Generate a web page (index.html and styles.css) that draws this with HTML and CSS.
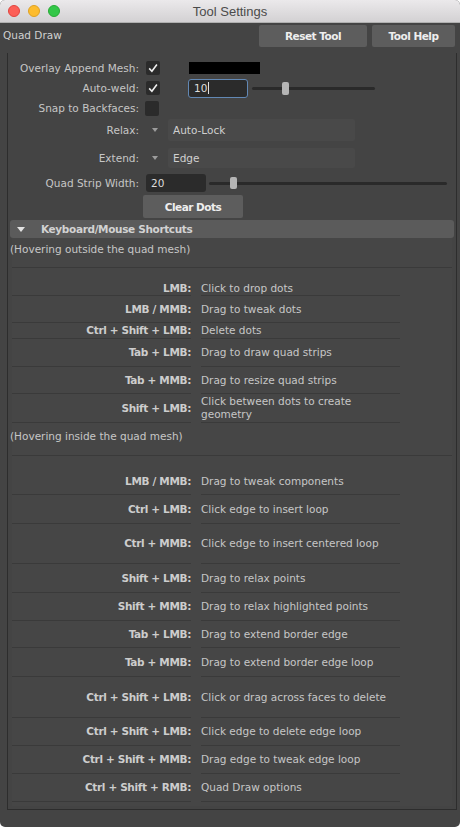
FILE: index.html
```html
<!DOCTYPE html>
<html>
<head>
<meta charset="utf-8">
<link rel="stylesheet" href="styles.css">
</head>
<body>
<div class="window">
  <div class="titlebar">
    <div class="lights"><span class="light red"></span><span class="light yellow"></span><span class="light green"></span></div>
    <div class="title">Tool Settings</div>
    <div></div>
  </div>
  <div class="toolbar">
    <div class="toolname">Quad Draw</div>
    <div class="toolbtns"><button class="btn reset">Reset Tool</button><button class="btn help">Tool Help</button></div>
  </div>
  <div class="frame">
    <div class="form">
      <div class="frow r-overlay"><span class="lbl">Overlay Append Mesh:</span><span class="cb"><svg width="14" height="14" viewBox="0 0 14 14"><polyline points="3.2,7.4 5.9,10.2 10.9,3.6" fill="none" stroke="#eeeeee" stroke-width="1.6"/></svg></span><span class="swatch"></span></div>
      <div class="frow r-autoweld"><span class="lbl">Auto-weld:</span><span class="cb"><svg width="14" height="14" viewBox="0 0 14 14"><polyline points="3.2,7.4 5.9,10.2 10.9,3.6" fill="none" stroke="#eeeeee" stroke-width="1.6"/></svg></span><span class="field focus">10<span class="caret"></span></span><span class="slider s-weld"><span class="thumb"></span></span></div>
      <div class="frow r-snap"><span class="lbl">Snap to Backfaces:</span><span class="cb snapcb"></span></div>
      <div class="frow r-relax"><span class="lbl">Relax:</span><span class="dd"></span><span class="combo">Auto-Lock</span></div>
      <div class="frow r-extend"><span class="lbl">Extend:</span><span class="dd"></span><span class="combo">Edge</span></div>
      <div class="frow r-strip"><span class="lbl">Quad Strip Width:</span><span class="field num">20</span><span class="slider s-strip"><span class="thumb"></span></span></div>
      <div class="frow r-clear"><button class="btn clear">Clear Dots</button></div>
    </div>
    <div class="sechead"><span class="tri"></span><span class="sectitle">Keyboard/Mouse Shortcuts</span></div>
    <div class="panel">
      <div class="glabel g1">(Hovering outside the quad mesh)</div>
      <div class="sgrid">
        <div class="srow h28 first"><div class="key">LMB:</div><div class="desc">Click to drop dots</div></div>
        <div class="srow h27"><div class="key">LMB / MMB:</div><div class="desc">Drag to tweak dots</div></div>
        <div class="srow h16"><div class="key">Ctrl + Shift + LMB:</div><div class="desc">Delete dots</div></div>
        <div class="srow h28"><div class="key">Tab + LMB:</div><div class="desc">Drag to draw quad strips</div></div>
        <div class="srow h27"><div class="key">Tab + MMB:</div><div class="desc">Drag to resize quad strips</div></div>
        <div class="srow h29"><div class="key">Shift + LMB:</div><div class="desc">Click between dots to create<br>geometry</div></div>
      </div>
      <div class="glabel g2">(Hovering inside the quad mesh)</div>
      <div class="sgrid">
        <div class="srow h39 first2"><div class="key">LMB / MMB:</div><div class="desc">Drag to tweak components</div></div>
        <div class="srow h29"><div class="key">Ctrl + LMB:</div><div class="desc">Click edge to insert loop</div></div>
        <div class="srow h40"><div class="key">Ctrl + MMB:</div><div class="desc">Click edge to insert centered loop</div></div>
        <div class="srow h29"><div class="key">Shift + LMB:</div><div class="desc">Drag to relax points</div></div>
        <div class="srow h28"><div class="key">Shift + MMB:</div><div class="desc">Drag to relax highlighted points</div></div>
        <div class="srow h27"><div class="key">Tab + LMB:</div><div class="desc">Drag to extend border edge</div></div>
        <div class="srow h29"><div class="key">Tab + MMB:</div><div class="desc">Drag to extend border edge loop</div></div>
        <div class="srow h41"><div class="key">Ctrl + Shift + LMB:</div><div class="desc">Click or drag across faces to delete</div></div>
        <div class="srow h28"><div class="key">Ctrl + Shift + LMB:</div><div class="desc">Click edge to delete edge loop</div></div>
        <div class="srow h28"><div class="key">Ctrl + Shift + MMB:</div><div class="desc">Drag edge to tweak edge loop</div></div>
        <div class="srow h28"><div class="key">Ctrl + Shift + RMB:</div><div class="desc">Quad Draw options</div></div>
      </div>
    </div>
  </div>
</div>
</body>
</html>
```

FILE: styles.css
```css
* { box-sizing: border-box; }
body {
  margin: 0;
  background: #ffffff;
  font-family: "DejaVu Sans", sans-serif;
  font-size: 10.5px;
  line-height: 13px;
  color: #c6c6c6;
}
.window {
  width: 460px;
  height: 827px;
  background: #444444;
  border-radius: 5px;
  overflow: hidden;
  display: flex;
  flex-direction: column;
}
.titlebar {
  height: 23px;
  flex: none;
  background: linear-gradient(#ebe9eb, #d3d1d3);
  border-bottom: 1px solid #b0b0b0;
  display: grid;
  grid-template-columns: 1fr auto 1fr;
  align-items: center;
}
.lights { display: flex; gap: 8px; padding-left: 8px; }
.light { width: 12px; height: 12px; border-radius: 50%; display: block; }
.red { background: #fc5f57; border: 1px solid #e0443e; }
.yellow { background: #fdbc2e; border: 1px solid #dea123; }
.green { background: #33c748; border: 1px solid #27aa35; }
.title {
  font-family: "Liberation Sans", Arial, sans-serif;
  font-size: 13px;
  color: #4b4b4b;
}
.toolbar {
  height: 30px;
  flex: none;
  display: flex;
  justify-content: space-between;
  align-items: flex-start;
  padding: 2px 5px 0 3px;
}
.toolname { margin-top: 4px; color: #d0d0d0; }
.toolbtns { display: flex; gap: 5px; }
.btn {
  height: 22px;
  background: #5d5d5d;
  border: none;
  border-radius: 2px;
  color: #eeeeee;
  font-family: "DejaVu Sans", sans-serif;
  font-size: 10.5px;
  font-weight: bold;
  letter-spacing: -0.5px;
  padding: 0;
}
.reset { width: 108px; }
.help { width: 83px; }
.frame {
  margin-left: 7px;
  width: 450px;
  border-left: 1px solid #2d2d2d;
  border-right: 1px solid #2d2d2d;
  border-bottom: 1px solid #2d2d2d;
  padding-bottom: 3px;
  display: flex;
  flex-direction: column;
}
.form { padding-top: 5px; display: flex; flex-direction: column; }
.frow { display: flex; align-items: center; height: 20px; }
.lbl { width: 131px; flex: none; text-align: right; white-space: nowrap; }
.cb {
  width: 14px; height: 14px; flex: none;
  margin-left: 7px;
  background: #2b2b2b;
  border-radius: 2px;
  display: block;
}
.cb svg { display: block; }
.snapcb { margin-left: 6px; height: 15px; }
.swatch { width: 71px; height: 12px; background: #000; margin-left: 29px; }
.field {
  height: 19px;
  width: 60px;
  margin-left: 28px;
  background: #2b2b2b;
  border-radius: 3px;
  color: #dddddd;
  display: flex;
  align-items: center;
  padding-left: 6px;
}
.focus { border: 1.5px solid #6288b4; padding-left: 5px; }
.caret { width: 1px; height: 12px; background: #e0e0e0; margin-left: 1px; }
.slider {
  height: 3px;
  background: #2a2a2a;
  border-radius: 2px;
  position: relative;
}
.thumb {
  position: absolute;
  width: 7px;
  height: 13px;
  top: -5px;
  background: #b5b5b5;
  border-radius: 2px;
}
.s-weld { width: 123px; margin-left: 4px; }
.s-weld .thumb { left: 30px; }
.r-relax { height: 24px; }
.r-extend { height: 24px; margin-top: 4px; }
.dd {
  width: 0; height: 0;
  margin-left: 13px;
  border-left: 3px solid transparent;
  border-right: 3px solid transparent;
  border-top: 4px solid #9c9c9c;
}
.combo {
  margin-left: 10px;
  width: 187px;
  height: 22px;
  background: #494949;
  border-radius: 2px;
  display: flex;
  align-items: center;
  padding-left: 5px;
  color: #d0d0d0;
}
.r-extend .combo { height: 20px; }
.r-strip { height: 22px; margin-top: 2px; }
.num { margin-left: 7px; height: 18px; padding-left: 5px; }
.s-strip { width: 238px; margin-left: 3px; }
.s-strip .thumb { left: 21px; top: -5px; height: 12px; }
.r-clear { height: 23px; margin-top: 1px; }
.clear { width: 100px; height: 23px; margin-left: 135px; }
.sechead {
  margin: 2px 0 0 2px;
  width: 444px;
  height: 18px;
  background: #5b5b5b;
  border-radius: 3px;
  display: flex;
  align-items: center;
  padding-left: 7px;
}
.tri {
  width: 0; height: 0;
  border-left: 4.5px solid transparent;
  border-right: 4.5px solid transparent;
  border-top: 5px solid #e2e2e2;
  margin-right: 16px;
}
.sectitle { font-weight: bold; letter-spacing: -0.35px; color: #d2d2d2; }
.panel {
  margin-left: 4px;
  width: 440px;
  background: #464646;
  padding-bottom: 4px;
}
.glabel {
  text-indent: -2px;
  border-bottom: 1px solid #3a3a3a;
  white-space: nowrap;
}
.g1 { height: 30px; padding-top: 5px; }
.g2 { height: 33px; padding-top: 7px; }
.sgrid { display: flex; flex-direction: column; }
.srow {
  display: grid;
  grid-template-columns: 179px 199px;
  column-gap: 10px;
}
.key, .desc {
  border-bottom: 1px solid #3a3a3a;
  display: flex;
  align-items: center;
  white-space: nowrap;
}
.key {
  justify-content: flex-end;
  font-weight: bold;
  letter-spacing: -0.35px;
  color: #cdcdcd;
}
.desc { color: #c6c6c6; }
.h16 { height: 16px; }
.h27 { height: 27px; }
.h28 { height: 28px; }
.h29 { height: 29px; }
.h39 { height: 39px; }
.h40 { height: 40px; }
.h41 { height: 41px; }
.first .key, .first .desc { padding-top: 13px; }
.first2 .key, .first2 .desc { padding-top: 12px; }
```
